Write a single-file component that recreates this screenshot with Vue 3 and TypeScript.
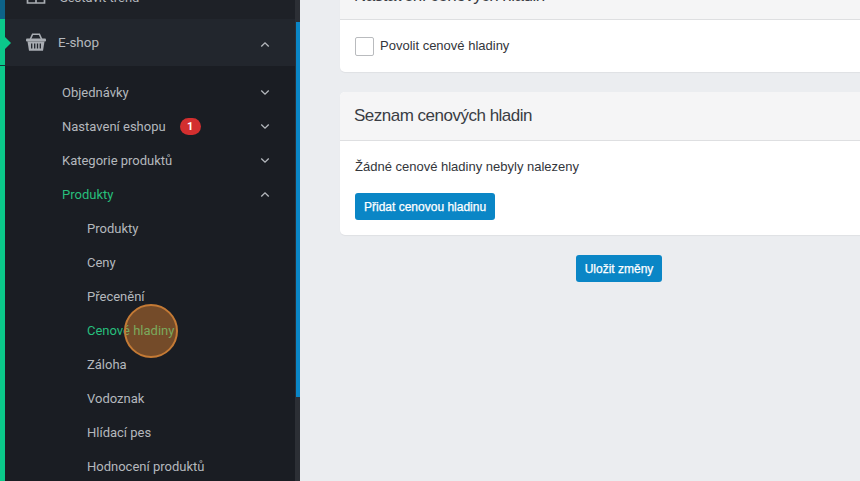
<script setup lang="ts">
interface NavItem {
  label: string
  level: 1 | 2
  active?: boolean
  open?: boolean
  arrow?: boolean
  badge?: number
}

const items: NavItem[] = [
  { label: 'Objednávky', level: 1, arrow: true },
  { label: 'Nastavení eshopu', level: 1, arrow: true, badge: 1 },
  { label: 'Kategorie produktů', level: 1, arrow: true },
  { label: 'Produkty', level: 1, arrow: true, open: true, active: true },
  { label: 'Produkty', level: 2 },
  { label: 'Ceny', level: 2 },
  { label: 'Přecenění', level: 2 },
  { label: 'Cenové hladiny', level: 2, active: true },
  { label: 'Záloha', level: 2 },
  { label: 'Vodoznak', level: 2 },
  { label: 'Hlídací pes', level: 2 },
  { label: 'Hodnocení produktů', level: 2 },
]
</script>

<template>
  <div class="page">
    <aside class="sidebar">
      <div class="stripe">
        <div class="stripe-top"></div>
        <div class="stripe-main"></div>
      </div>

      <nav class="nav">
        <div class="top-row">
          <svg class="top-icon" viewBox="0 0 20 20" width="20" height="20">
            <path d="M1.5 2h17v14h-17zM1.5 7.5h17M10 2v14" fill="none" stroke="#a9adb3" stroke-width="1.7" />
          </svg>
          <span class="top-label">Sestavit trend</span>
        </div>

        <div class="shop-row">
          <svg class="basket" viewBox="0 0 22 20" width="22" height="20">
            <path d="M5 8 7.6 2.2h6.8L17 8" fill="none" stroke="#a9adb3" stroke-width="1.6" />
            <rect x="1" y="6.5" width="20" height="3" rx="1" fill="#a9adb3" />
            <path d="M2.5 9.5h17l-1.5 9.2H4z" fill="#a9adb3" />
            <path d="M6.7 11.5v5M9.7 11.5v5M12.5 11.5v5M15.3 11.5v5" stroke="#22262d" stroke-width="1.3" fill="none" />
          </svg>
          <span class="shop-label">E-shop</span>
          <svg class="chev shop-chev" viewBox="0 0 12 8" width="10" height="7">
            <path d="M1.5 6.5 6 2l4.5 4.5" fill="none" stroke="#b4b8bd" stroke-width="1.6" />
          </svg>
        </div>

        <ul class="menu">
          <li
            v-for="item in items"
            :key="item.label + item.level"
            class="menu-item"
            :class="{ sub: item.level === 2, active: item.active }"
          >
            <span class="menu-label">
              {{ item.label }}
              <span v-if="item.label === 'Cenové hladiny'" class="click-dot"></span>
            </span>
            <span v-if="item.badge" class="badge">{{ item.badge }}</span>
            <svg v-if="item.arrow" class="chev" viewBox="0 0 12 8" width="10" height="7">
              <path
                :d="item.open ? 'M1.5 6.5 6 2l4.5 4.5' : 'M1.5 1.5 6 6l4.5-4.5'"
                fill="none"
                stroke="#b4b8bd"
                stroke-width="1.6"
              />
            </svg>
          </li>
        </ul>
      </nav>

      <div class="scrollbar">
        <div class="scroll-thumb"></div>
      </div>
    </aside>

    <main class="content">
      <section class="panel panel-first">
        <header class="panel-head">
          <h2>Nastavení cenových hladin</h2>
        </header>
        <div class="panel-body check-body">
          <span class="checkbox"></span>
          <span class="check-label">Povolit cenové hladiny</span>
        </div>
      </section>

      <section class="panel panel-list">
        <header class="panel-head">
          <h2>Seznam cenových hladin</h2>
        </header>
        <div class="panel-body list-body">
          <p>Žádné cenové hladiny nebyly nalezeny</p>
          <button class="btn" type="button">Přidat cenovou hladinu</button>
        </div>
      </section>

      <div class="actions">
        <button class="btn" type="button">Uložit změny</button>
      </div>
    </main>
  </div>
</template>

<style>
html,
body {
  margin: 0;
  overflow: hidden;
}
</style>

<style scoped>
.page {
  display: flex;
  width: 860px;
  height: 481px;
  overflow: hidden;
  background: #ebedf0;
}

.sidebar {
  display: flex;
  flex: 0 0 300px;
  height: 481px;
  overflow: hidden;
  background: #1a1d23;
}

.stripe {
  display: flex;
  flex: 0 0 5px;
  flex-direction: column;
}

.stripe-top {
  height: 19px;
  background: #0d6288;
}

.stripe-main {
  flex: 1;
  background: #0bc98a;
  background-image: linear-gradient(#0bc98a 46px, #14373a 46px, #14373a 47px, #0bc98a 47px);
}

.nav {
  flex: 1;
  min-width: 0;
  font-family: Roboto, sans-serif;
  font-size: 13px;
  color: #b4b8bd;
}

.top-row {
  display: flex;
  align-items: center;
  height: 19px;
  padding-left: 21px;
  overflow: hidden;
  background: #1e2127;
}

.top-icon {
  flex: none;
  margin-top: -25px;
}

.top-label {
  margin: -25px 0 0 14px;
  font-size: 13px;
}

.shop-row {
  position: relative;
  display: flex;
  align-items: center;
  height: 47px;
  padding: 0 25px 0 20px;
  background: #22262d;
}

.shop-row::before {
  content: '';
  position: absolute;
  left: 0;
  top: 18px;
  border-top: 6px solid transparent;
  border-bottom: 6px solid transparent;
  border-left: 6px solid #0bc98a;
}

.basket {
  flex: none;
  margin-top: -1px;
}

.shop-label {
  margin: -2px 0 0 11px;
  font-size: 13.5px;
}

.chev {
  flex: none;
  margin-left: auto;
}

.shop-chev {
  margin-top: 4px;
}

.menu {
  list-style: none;
  margin: 9px 0 0;
  padding: 0;
}

.menu-item {
  display: flex;
  align-items: center;
  height: 34px;
  padding: 0 25px 0 57px;
  box-sizing: border-box;
}

.menu-item.sub {
  padding-left: 82px;
}

.menu-item.active {
  color: #27bf7c;
}

.menu-label {
  position: relative;
  white-space: nowrap;
}

.badge {
  display: flex;
  align-items: center;
  justify-content: center;
  width: 21px;
  height: 17px;
  margin: 1px 0 0 14px;
  border-radius: 9px;
  background: #d32f2f;
  color: #fff;
  font-size: 11px;
  font-weight: 700;
}

.click-dot {
  position: absolute;
  left: 37px;
  top: -19px;
  width: 50px;
  height: 50px;
  border: 2px solid #c47a35;
  border-radius: 50%;
  background: rgba(240, 140, 50, 0.42);
}

.scrollbar {
  flex: 0 0 5px;
  background: #2c2f35;
}

.scroll-thumb {
  height: 375px;
  margin: 22px 0 0 1px;
  background: #0a86c6;
}

.content {
  flex: 0 0 558px;
  margin-left: 40px;
  font-family: "Liberation Sans", Arial, sans-serif;
  font-size: 13px;
  color: #33363b;
}

.panel {
  background: #fff;
  border-radius: 5px;
  box-shadow: 0 1px 1px rgba(0, 0, 0, 0.05);
}

.panel-first {
  margin-top: -29px;
}

.panel-first .panel-head h2 {
  margin-top: 2px;
}

.panel-list {
  margin-top: 20px;
}

.panel-head {
  display: flex;
  align-items: center;
  height: 48px;
  padding: 0 14px;
  background: #f5f5f6;
  border-bottom: 1px solid #dedfe1;
  border-radius: 5px 5px 0 0;
}

.panel-head h2 {
  margin: 0;
  font-size: 17px;
  font-weight: 400;
  letter-spacing: -0.5px;
  color: #3a3d44;
}

.panel-body {
  padding: 0 15px;
}

.check-body {
  display: flex;
  align-items: center;
  height: 52px;
}

.check-label {
  margin-top: -2px;
}

.checkbox {
  width: 17px;
  height: 17px;
  margin-right: 6px;
  border: 1px solid #b9bbbe;
  border-radius: 2px;
  background: #fff;
}

.list-body {
  height: 94px;
  padding-top: 18px;
  box-sizing: border-box;
}

.list-body p {
  margin: 0 0 18px;
  line-height: 16px;
}

.btn {
  display: inline-block;
  height: 27px;
  padding: 0 9px;
  border: 0;
  border-radius: 3px;
  background: #0a86c6;
  color: #fff;
  font-family: "Liberation Sans", Arial, sans-serif;
  font-size: 12px;
  -webkit-text-stroke: 0.25px #fff;
}

.actions {
  display: flex;
  justify-content: center;
  margin-top: 20px;
}
</style>
